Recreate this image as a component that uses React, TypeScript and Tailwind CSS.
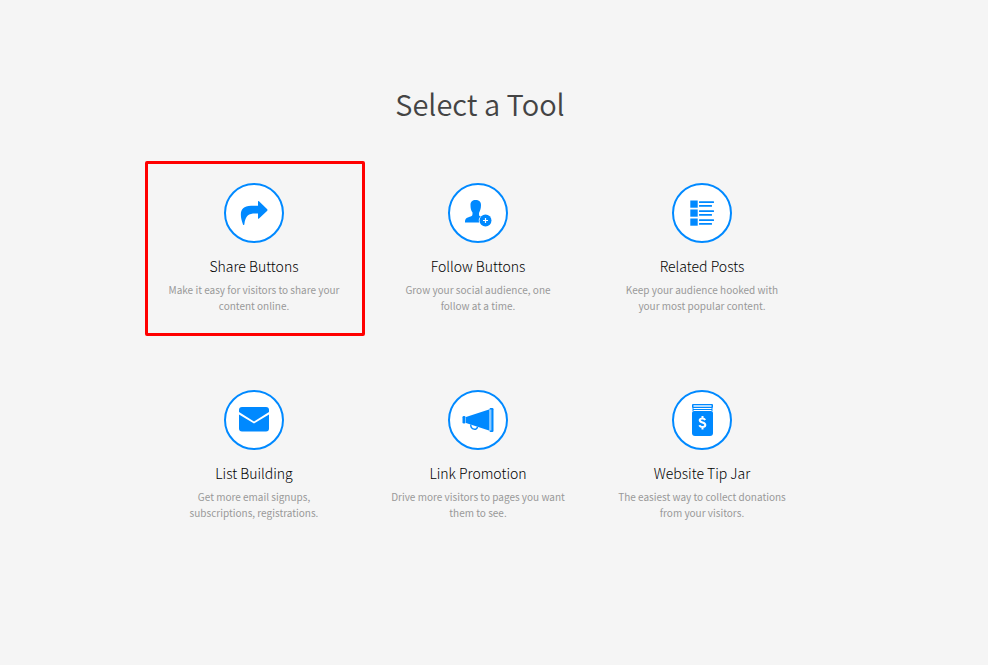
import type { ReactNode } from "react";

type Tool = { name: string; lines: [string, string]; icon: ReactNode; highlighted?: boolean };

const ShareIcon = () => (
  <svg viewBox="0 0 60 60" className="h-full w-full" fill="#0089ff" aria-hidden="true">
    <path d="M34 18.600Q34 17.500 35 18.300L43 26Q44 27 43 28L35 35.500Q34 36.300 34 35.200V30.500C26 30 21.500 31 20.300 41.500Q19.800 42.500 19 41.500C15 31 16 22.800 27 22.800H34Z" />
  </svg>
);

const FollowIcon = () => (
  <svg viewBox="0 0 60 60" className="h-full w-full" fill="#0089ff" aria-hidden="true">
    <path d="M27.500 17C31 17 33 18.500 33 22C33 25.500 32 27.500 31 30V32.500L32.500 33.500C30.500 35.500 30.500 37.500 31.200 39.500H17C17 36 18 35 21 34C23.500 33 24.500 33 24.500 31V29.500C23 27.500 22.500 25.500 22.500 22C22.500 18.500 24.500 17 27.500 17Z" />
    <circle cx="37.500" cy="37.500" r="6" />
    <path d="M37.500 35V40M35 37.500H40" stroke="#fff" strokeWidth="1.200" />
  </svg>
);

const PostsIcon = () => (
  <svg viewBox="0 0 60 60" className="h-full w-full" fill="#0089ff" aria-hidden="true">
    {[18, 27, 36].map((y) => (
      <g key={y}>
        <rect x="18.300" y={y - 0.5} width="7.400" height="7.200" />
        <rect x="27" y={y + 0.3} width="15" height="1.700" rx="0.500" />
        <rect x="27" y={y + 4} width="13" height="1.700" rx="0.500" />
      </g>
    ))}
  </svg>
);

const MailIcon = () => (
  <svg viewBox="0 0 60 60" className="h-full w-full" fill="#0089ff" aria-hidden="true">
    <path d="M15 22V20Q15 17 18 17H42Q45 17 45 20V22L30 31.500Z" />
    <path d="M15 24.500L30 33.500L45 24.500V38.500Q45 41.500 42 41.500H18Q15 41.500 15 38.500Z" />
  </svg>
);

const MegaphoneIcon = () => (
  <svg viewBox="0 0 60 60" className="h-full w-full" fill="#0089ff" aria-hidden="true">
    <path d="M18 27L41 19.500V40.500L18 33Z" />
    <rect x="14.500" y="26" width="3" height="7.500" rx="1.300" />
    <rect x="41.500" y="18" width="4" height="24" rx="1.200" />
    <path d="M42.800 19.500V40.500" stroke="#fff" strokeWidth="0.800" />
    <path d="M22.700 34.500C22.700 40 29 40.500 29.500 36.800" fill="none" stroke="#0089ff" strokeWidth="1.400" />
  </svg>
);

const JarIcon = () => (
  <svg viewBox="0 0 60 60" className="h-full w-full" fill="#0089ff" aria-hidden="true">
    <rect x="20" y="14" width="21" height="4" rx="1" />
    <rect x="21.500" y="15.300" width="18" height="1.400" fill="#fff" />
    <path d="M21 17.500V21M40 17.500V21M21 19.500H40" stroke="#0089ff" strokeWidth="1" />
    <path d="M22 21H39Q41 21 41 23V43Q41 46 38 46H23Q20 46 20 43V23Q20 21 22 21Z" />
    <path d="M33.200 30C32.500 28.800 31.500 28.500 30.500 28.500C26.500 28.500 27 31.500 30.500 32.500C34.500 33.600 34 37 30.500 37C29 37 28 36.500 27.300 35.300M30.500 26V28.500M30.500 37V39.500" fill="none" stroke="#fff" strokeWidth="2" />
  </svg>
);

const tools: Tool[] = [
  { name: "Share Buttons", lines: ["Make it easy for visitors to share your", "content online."], icon: <ShareIcon />, highlighted: true },
  { name: "Follow Buttons", lines: ["Grow your social audience, one", "follow at a time."], icon: <FollowIcon /> },
  { name: "Related Posts", lines: ["Keep your audience hooked with", "your most popular content."], icon: <PostsIcon /> },
  { name: "List Building", lines: ["Get more email signups,", "subscriptions, registrations."], icon: <MailIcon /> },
  { name: "Link Promotion", lines: ["Drive more visitors to pages you want", "them to see."], icon: <MegaphoneIcon /> },
  { name: "Website Tip Jar", lines: ["The easiest way to collect donations", "from your visitors."], icon: <JarIcon /> },
];

function ToolCard({ tool }: { tool: Tool }) {
  return (
    <button type="button" className="relative flex w-full flex-col items-center pt-[22px] pb-[22px] text-center">
      <span className="block size-[60px] rounded-full bg-white">
        <span className="relative block size-full">
          {tool.icon}
          <span className="absolute inset-0 rounded-full border-2 border-[#0089ff]" />
        </span>
      </span>
      <span className="mt-[11px] text-[14px] leading-6 font-light text-black">{tool.name}</span>
      <span className="mt-1 text-[10px] leading-4 whitespace-nowrap text-[#999999]">
        {tool.lines[0]}
        <br />
        {tool.lines[1]}
      </span>
      {tool.highlighted && (
        <span className="pointer-events-none absolute inset-y-0 right-px left-[3px] rounded-[2px] border-3 border-[#ff0000]" />
      )}
    </button>
  );
}

export default function App() {
  return (
    <main className="min-h-screen bg-[#f5f5f5] pt-20 pr-8 font-['Noto_Sans_CJK_SC',sans-serif]">
      <div className="mx-auto w-full max-w-[672px]">
        <h1 className="pl-1 text-center text-[29px] leading-[46px] font-[350] text-[#444444]">Select a Tool</h1>
        <div className="mt-[35px] grid grid-cols-3 gap-y-8">
          {tools.map((tool) => (
            <ToolCard key={tool.name} tool={tool} />
          ))}
        </div>
      </div>
    </main>
  );
}
